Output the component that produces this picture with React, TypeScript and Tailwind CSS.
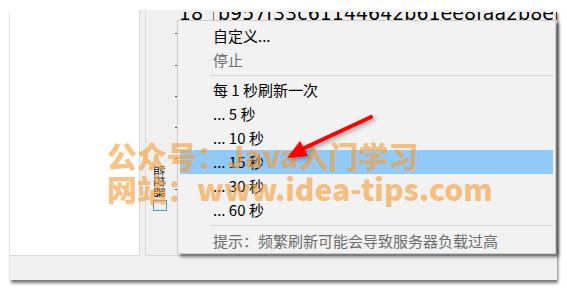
import React from "react";

const cjk = { fontFamily: '"Noto Sans CJK SC", "Noto Sans", sans-serif' };

type Item = { label: string; muted?: boolean; active?: boolean };

const topItems: Item[] = [{ label: "自定义..." }, { label: "停止", muted: true }];
const intervals: Item[] = [
  { label: "每 1 秒刷新一次" },
  { label: "... 5 秒" },
  { label: "... 10 秒" },
  { label: "... 15 秒", active: true },
  { label: "... 30 秒" },
  { label: "... 60 秒" },
];

function MenuRow({ item }: { item: Item }) {
  return (
    <div
      className={`h-[24px] pl-[33px] leading-[24px] text-[15px] ${item.active ? "bg-[#91c9f7]" : ""} ${
        item.muted ? "text-[#6d6d6d]" : "text-black"
      }`}
    >
      {item.label}
    </div>
  );
}

function Separator({ h }: { h: string }) {
  return (
    <div className={`flex items-center ${h}`}>
      <div className="ml-[30px] h-px flex-1 bg-[#d7d7d7]" />
    </div>
  );
}

function RefreshMenu() {
  return (
    <div
      className="absolute left-[167px] top-[10px] w-[379px] border border-[#cccccc] bg-[#f2f2f2] px-[2px] pt-[3px] shadow-[3px_3px_3px_rgba(0,0,0,0.5)]"
      style={cjk}
    >
      {topItems.map((it) => (
        <MenuRow key={it.label} item={it} />
      ))}
      <Separator h="h-[6px]" />
      {intervals.map((it) => (
        <MenuRow key={it.label} item={it} />
      ))}
      <Separator h="h-[7px]" />
      <div className="h-[24px] pl-[33px] leading-[24px] text-[15px] text-[#6d6d6d]">
        提示：频繁刷新可能会导致服务器负载过高
      </div>
    </div>
  );
}

function Ticks() {
  return (
    <svg width="7" height="246" className="block">
      {[23, 55, 86, 117, 148, 179].map((y) => (
        <rect key={y} x="4" y={y} width="3" height="1" fill="#555" />
      ))}
    </svg>
  );
}

function Watermark() {
  return (
    <div
      className="pointer-events-none absolute left-[107px] top-[139px] text-[30px] font-black leading-[33px] text-[rgba(245,160,60,0.65)]"
      style={cjk}
    >
      <div>公众号：Java入门学习</div>
      <div>网站：www.idea-tips.com</div>
    </div>
  );
}

function Arrow() {
  return (
    <svg
      className="pointer-events-none absolute left-0 top-0"
      width="567"
      height="291"
      style={{ filter: "drop-shadow(2px 2px 2px rgba(0,0,0,0.35))" }}
    >
      <line x1="371" y1="117" x2="300" y2="150" stroke="#ff0000" strokeWidth="4" strokeLinecap="round" />
      <polygon points="287,158 300,141 308,156" fill="#ff0000" />
    </svg>
  );
}

export default function App() {
  return (
    <div className="relative h-[291px] w-[567px] overflow-hidden bg-white">
      <div className="pl-[10px] pt-[10px]">
        <div className="relative flex h-[270px] w-[547px] flex-col bg-[#f0f0f0] shadow-[1px_3px_3px_rgba(0,0,0,0.55)]">
          <div className="flex h-[246px]">
            <div className="w-[130px] border-b border-r border-[#d9d9d9] bg-white" />
            <div className="w-[5px]" />
            <div className="flex flex-1 overflow-hidden border-b border-l border-[#d9d9d9]">
              <div className="flex w-[32px]">
                <div className="flex w-[25px] flex-col items-center pt-[155px] pl-[2px]">
                  <span
                    className="text-[11px] leading-[13px] text-black [writing-mode:vertical-rl] [text-orientation:sideways]"
                    style={cjk}
                  >
                    监控器
                  </span>
                  <div className="mt-[2px] h-[11px] w-[14px] border border-[#3a9ad9]" />
                </div>
                <Ticks />
              </div>
              <div className="flex-1" />
            </div>
          </div>
          <div className="flex-1" />

          {/* clipped grid row peeking above the menu */}
          <div className="absolute left-[135px] top-[2px] flex h-[8px] w-[412px] overflow-hidden">
            <div
              className="-mt-[8px] flex text-[19px] leading-[19px] text-black"
              style={{ fontFamily: '"DejaVu Sans", sans-serif' }}
            >
              <div className="w-[68px] pr-[10px] text-right">18</div>
              <div className="mt-[8px] h-[12px] w-px bg-[#777]" />
              <div className="whitespace-nowrap pl-[4px]">b957f33c61144642b61ee8faa2b8ef</div>
            </div>
          </div>

          <RefreshMenu />
        </div>
      </div>
      <Watermark />
      <Arrow />
    </div>
  );
}
